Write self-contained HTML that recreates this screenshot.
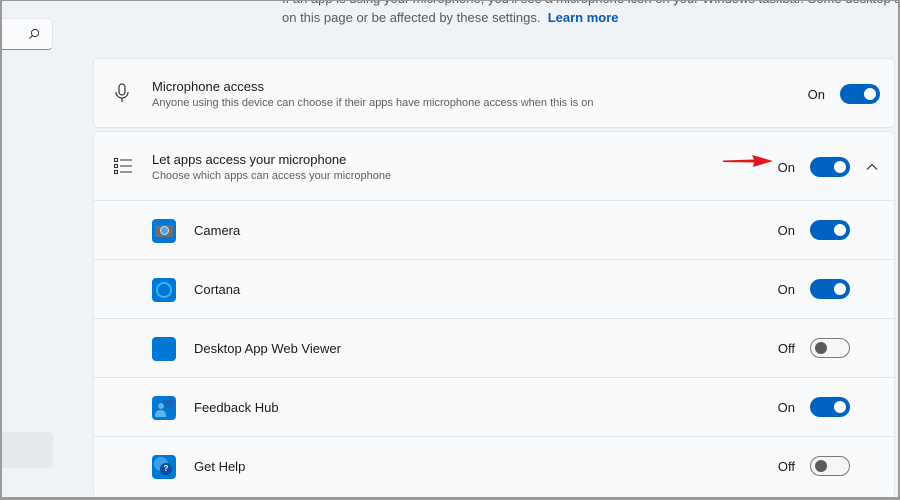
<!DOCTYPE html>
<html style="width:900px;height:500px;overflow:hidden"><head><style>
*{margin:0;padding:0;box-sizing:border-box}
body{width:900px;height:500px;overflow:hidden;background:#eff3f8;font-family:"Liberation Sans",sans-serif;color:#1b1b1b;position:relative}
.frame{position:absolute;background:#9a9a9a}
.search{position:absolute;left:0;top:18px;width:53px;height:32px;background:#fafbfd;border:1px solid #e3e5e8;border-bottom-color:#8a8a8a;border-left:none;border-radius:0 5px 5px 0}
.card{position:absolute;left:93px;right:5px;background:#f9fafc;border:1px solid #e3e6ea;border-radius:5px}
.t{position:absolute;left:58px;font-size:13px;color:#1b1b1b}
.s{position:absolute;left:58px;font-size:11px;color:#606060}
.row{position:absolute;left:0;right:0;height:59px;border-top:1px solid #e2e5e9}
.lbl{position:absolute;right:99px;font-size:13px;color:#1b1b1b}
.tg{position:absolute;right:44px;width:40px;height:20px;border-radius:10px;background:#0063c1}
.tg:after{content:"";position:absolute;right:4px;top:4px;width:12px;height:12px;border-radius:50%;background:#fff}
.tg.off{background:#f6f6f6;border:1px solid #7a7a7a}
.tg.off:after{left:4px;right:auto;top:3px;background:#5c5c5c}
.ic{position:absolute;left:58px;top:18px;width:24px;height:24px;border-radius:4px;background:#0078d4}
.nm{position:absolute;left:100px;top:22px;font-size:13px}
</style></head><body>
<div style="position:absolute;left:282px;top:0;width:616px;height:40px;overflow:hidden"><div style="position:absolute;left:0;top:-11px;font-size:13px;color:#5a5a5a;line-height:19px;white-space:nowrap">If an app is using your microphone, you'll see a microphone icon on your Windows taskbar. Some desktop apps might not appear<br>on this page or be affected by these settings. &nbsp;<span style="color:#0b5cad;font-weight:bold">Learn more</span></div></div>
<div class="search"><svg style="position:absolute;left:28px;top:9px" width="12" height="12" viewBox="0 0 12 12"><circle cx="7" cy="5" r="3.6" fill="none" stroke="#333" stroke-width="1"/><path d="M4.4 7.6L1.5 10.5" stroke="#333" stroke-width="1.1"/></svg></div>
<div style="position:absolute;left:2px;top:432px;width:51px;height:36px;background:#e5e8ed;border-radius:0 5px 5px 0"></div>

<div class="card" style="top:58px;height:70px">
<svg style="position:absolute;left:20px;top:24px" width="16" height="20" viewBox="0 0 16 20"><rect x="5" y="1" width="6" height="11" rx="3" fill="none" stroke="#333" stroke-width="1.2"/><path d="M2 9a6 6 0 0 0 12 0M8 15v4" fill="none" stroke="#333" stroke-width="1.2"/></svg>
<div class="t" style="top:20px">Microphone access</div>
<div class="s" style="top:38px">Anyone using this device can choose if their apps have microphone access when this is on</div>
<div class="lbl" style="top:28px;right:69px">On</div>
<div class="tg" style="top:25px;right:14px"></div>
</div>

<div class="card" style="top:131px;height:368px">
<svg style="position:absolute;left:19px;top:25px" width="20" height="18" viewBox="0 0 20 18"><g fill="none" stroke="#333" stroke-width="1.1"><rect x="1.5" y="1.5" width="3" height="3"/><rect x="1.5" y="7.5" width="3" height="3"/><rect x="1.5" y="13.5" width="3" height="3"/><path d="M7 3h12M7 9h12M7 15h12"/></g></svg>
<div class="t" style="top:20px">Let apps access your microphone</div>
<div class="s" style="top:38px">Choose which apps can access your microphone</div>
<svg style="position:absolute;left:628px;top:22px" width="52" height="14" viewBox="0 0 52 14"><path d="M1 6.5L32 5.5L30 1L51 7L31 13L32 8.5L1 8Z" fill="#e5141b"/></svg>
<div class="lbl" style="top:28px">On</div>
<div class="tg" style="top:25px"></div>
<svg style="position:absolute;right:16px;top:31px" width="12" height="8" viewBox="0 0 12 8"><path d="M1 6.5L6 1.5L11 6.5" fill="none" stroke="#333" stroke-width="1.2"/></svg>

<div class="row" style="top:68px"><div class="ic" style="background:#0078d4"><div style="position:absolute;left:3px;top:6px;width:18px;height:12px;background:#6b6f75;border-radius:2px"></div><div style="position:absolute;left:8px;top:7px;width:9px;height:9px;border-radius:50%;background:#4aa3e8;border:1.5px solid #ddd"></div></div><div class="nm">Camera</div><div class="lbl" style="top:22px">On</div><div class="tg" style="top:19px"></div></div>
<div class="row" style="top:127px"><div class="ic"><div style="position:absolute;left:4px;top:4px;width:16px;height:16px;border-radius:50%;border:2px solid #39b3f5"></div></div><div class="nm">Cortana</div><div class="lbl" style="top:22px">On</div><div class="tg" style="top:19px"></div></div>
<div class="row" style="top:186px"><div class="ic"></div><div class="nm">Desktop App Web Viewer</div><div class="lbl" style="top:22px">Off</div><div class="tg off" style="top:19px"></div></div>
<div class="row" style="top:245px"><div class="ic"><div style="position:absolute;left:11px;top:3px;width:10px;height:8px;background:#1565b8"></div><div style="position:absolute;left:6px;top:7px;width:6px;height:6px;border-radius:50%;background:#5ab4f0"></div><div style="position:absolute;left:3px;top:14px;width:11px;height:7px;border-radius:5px 5px 0 0;background:#5ab4f0"></div></div><div class="nm">Feedback Hub</div><div class="lbl" style="top:22px">On</div><div class="tg" style="top:19px"></div></div>
<div class="row" style="top:304px"><div class="ic"><div style="position:absolute;left:2px;top:2px;width:14px;height:14px;border-radius:50%;background:#3aa0ea"></div><div style="position:absolute;left:8px;top:8px;width:12px;height:12px;border-radius:50%;background:#0a4fa0;color:#fff;font-size:8px;font-weight:bold;text-align:center;line-height:12px">?</div></div><div class="nm">Get Help</div><div class="lbl" style="top:22px">Off</div><div class="tg off" style="top:19px"></div></div>
</div>

<div class="frame" style="left:0;top:0;width:2px;height:500px"></div>
<div class="frame" style="left:0;top:0;width:900px;height:1px"></div>
<div class="frame" style="left:898px;top:0;width:2px;height:500px"></div>
<div class="frame" style="left:0;top:497px;width:900px;height:3px"></div>
</body></html>
